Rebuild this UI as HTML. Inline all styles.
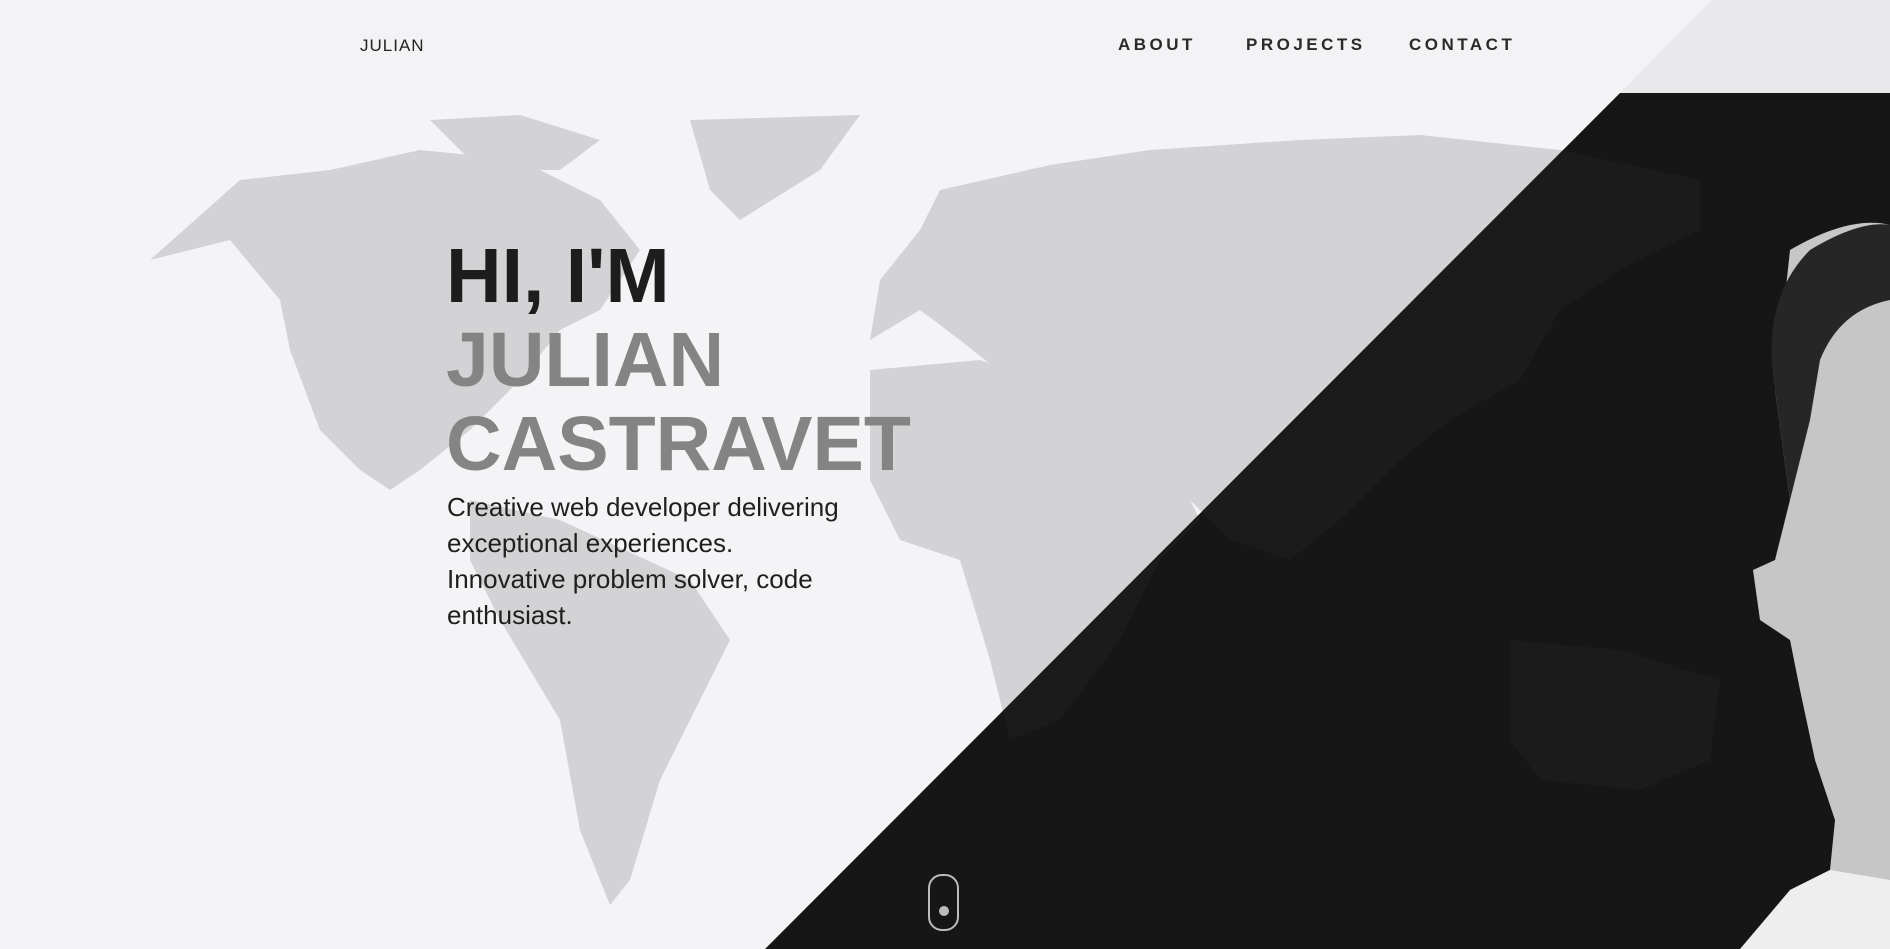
<!DOCTYPE html>
<html><head><meta charset="utf-8"><style>
html,body{margin:0;padding:0;width:1890px;height:949px;overflow:hidden;background:#f4f4f6;font-family:"Liberation Sans",sans-serif;position:relative}
.hdr{position:absolute;left:0;top:0;width:1890px;height:93px;background:#f3f3f5;z-index:5}
.logo{position:absolute;left:360px;top:36px;font-size:17px;color:#222;letter-spacing:1px}
.nav{position:absolute;top:35px;font-size:17px;font-weight:bold;color:#2a2a2a;letter-spacing:3.5px}
h1{position:absolute;left:446px;top:234px;margin:0;font-size:77px;line-height:84px;font-weight:900;letter-spacing:0px;z-index:3}
h1 .a{color:#1d1d1d}
h1 .b{color:#848484}
p{position:absolute;left:447px;top:489px;margin:0;font-size:26px;line-height:36px;color:#1f1f1f;z-index:3;width:480px}
</style></head><body>
<svg width="1890" height="949" style="position:absolute;left:0;top:0">
<defs><clipPath id="dk"><polygon points="1620,93 1890,93 1890,949 765,949"/></clipPath></defs>
<g fill="#d3d3d5">
<path d="M150,260 L240,180 L330,170 L420,150 L520,160 L600,200 L640,250 L600,310 L560,330 L520,380 L470,430 L420,470 L390,490 L360,470 L320,430 L290,350 L280,300 L230,240 Z"/>
<path d="M430,120 L520,115 L600,140 L560,170 L480,170 Z"/>
<path d="M690,120 L860,115 L820,170 L740,220 L710,190 Z"/>
<path d="M470,500 L560,520 L690,580 L730,640 L700,700 L660,780 L630,880 L610,905 L580,830 L560,720 L500,620 L470,560 Z"/>
<path d="M940,190 L1050,165 L1150,150 L1300,140 L1420,135 L1560,150 L1700,180 L1700,230 L1620,270 L1560,310 L1520,380 L1450,420 L1400,460 L1340,520 L1290,560 L1230,540 L1190,500 L1160,470 L1080,420 L1010,380 L960,340 L920,310 L870,340 L880,280 L920,230 Z"/>
<path d="M870,370 L980,360 L1090,400 L1160,440 L1200,520 L1160,560 L1120,640 L1060,720 L1010,740 L990,660 L960,560 L900,540 L870,480 Z"/>
<path d="M1510,640 L1620,650 L1720,680 L1710,760 L1640,790 L1540,780 L1510,740 Z"/>
</g>
<g clip-path="url(#dk)"><rect x="0" y="0" width="1890" height="949" fill="#161616"/>
<g fill="#1b1b1b"><path d="M940,190 L1050,165 L1150,150 L1300,140 L1420,135 L1560,150 L1700,180 L1700,230 L1620,270 L1560,310 L1520,380 L1450,420 L1400,460 L1340,520 L1290,560 L1230,540 L1190,500 L1160,470 L1080,420 L1010,380 L960,340 L920,310 L870,340 L880,280 L920,230 Z"/>
<path d="M870,370 L980,360 L1090,400 L1160,440 L1200,520 L1160,560 L1120,640 L1060,720 L1010,740 L990,660 L960,560 L900,540 L870,480 Z"/>
<path d="M1510,640 L1620,650 L1720,680 L1710,760 L1640,790 L1540,780 L1510,740 Z"/></g>
<path d="M1790,250 Q1850,215 1890,225 L1890,949 L1770,949 L1790,890 L1830,870 L1835,820 L1815,760 L1800,690 L1790,640 L1760,620 L1753,570 L1775,560 L1790,500 L1775,390 Z" fill="#c6c6c6"/>
<path d="M1775,390 Q1760,300 1810,250 Q1860,220 1890,225 L1890,300 Q1840,310 1820,360 L1810,420 L1790,500 Z" fill="#262626"/>
<path d="M1740,949 L1790,890 L1830,870 L1890,880 L1890,949 Z" fill="#eeeeee"/>
</g>
</svg>
<div class="hdr">
<svg width="1890" height="93" style="position:absolute;left:0;top:0"><polygon points="1712,0 1890,0 1890,93 1620,93" fill="#e9e9ec"/></svg>
<div class="logo">JULIAN</div>
<div class="nav" style="left:1118px">ABOUT</div>
<div class="nav" style="left:1246px">PROJECTS</div>
<div class="nav" style="left:1409px">CONTACT</div>
</div>
<h1><span class="a">HI, I'M</span><br><span class="b">JULIAN</span><br><span class="b">CASTRAVET</span></h1>
<p>Creative web developer delivering exceptional experiences.<br>Innovative problem solver, code enthusiast.</p>
<div style="position:absolute;left:928px;top:874px;width:27px;height:53px;border:2px solid #bbb;border-radius:14px;z-index:4"><div style="position:absolute;left:9px;top:30px;width:10px;height:10px;border-radius:50%;background:#bbb"></div></div>
</body></html>
